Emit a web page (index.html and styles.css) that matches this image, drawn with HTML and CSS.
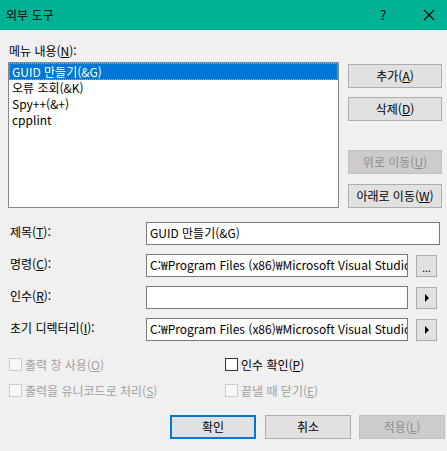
FILE: index.html
```html
<!DOCTYPE html>
<html lang="ko">
<head>
<meta charset="utf-8">
<link rel="stylesheet" href="styles.css">
</head>
<body>
<div class="window">
  <div class="titlebar">
    <span class="title">외부 도구</span>
    <span class="help">?</span>
    <svg class="close" width="12" height="12" viewBox="0 0 12 12"><path d="M1 1L11 11M11 1L1 11" stroke="#000" stroke-width="1.1" fill="none"/></svg>
  </div>
  <div class="content">
    <div class="menu-label">메뉴 내용(<u>N</u>):</div>
    <div class="list-row">
      <div class="listbox">
        <div class="item selected">GUID 만들기(&amp;G)</div>
        <div class="item">오류 조회(&amp;K)</div>
        <div class="item">Spy++(&amp;+)</div>
        <div class="item">cpplint</div>
      </div>
      <div class="side-buttons">
        <div class="btn b-add">추가(<u>A</u>)</div>
        <div class="btn b-del">삭제(<u>D</u>)</div>
        <div class="btn disabled b-up">위로 이동(<u>U</u>)</div>
        <div class="btn b-down">아래로 이동(<u>W</u>)</div>
      </div>
    </div>
    <div class="form">
      <div class="label">제목(<u>T</u>):</div>
      <div class="field"><div class="textbox wide">GUID 만들기(&amp;G)</div></div>
      <div class="label">명령(<u>C</u>):</div>
      <div class="field"><div class="textbox">C:₩Program Files (x86)₩Microsoft Visual Studio</div><div class="small-btn dots"><span>...</span></div></div>
      <div class="label">인수(<u>R</u>):</div>
      <div class="field"><div class="textbox"></div><div class="small-btn"><span class="tri"></span></div></div>
      <div class="label">초기 디렉터리(<u>I</u>):</div>
      <div class="field"><div class="textbox">C:₩Program Files (x86)₩Microsoft Visual Studio</div><div class="small-btn"><span class="tri"></span></div></div>
    </div>
    <div class="checks">
      <div class="check disabled"><span class="box"></span>출력 창 사용(<u>O</u>)</div>
      <div class="check"><span class="box"></span>인수 확인(<u>P</u>)</div>
      <div class="check disabled"><span class="box"></span>출력을 유니코드로 처리(<u>S</u>)</div>
      <div class="check disabled"><span class="box"></span>끝낼 때 닫기(<u>E</u>)</div>
    </div>
    <div class="bottom">
      <div class="btn default">확인</div>
      <div class="btn b-cancel">취소</div>
      <div class="btn disabled b-apply">적용(<u>L</u>)</div>
    </div>
  </div>
</div>
</body>
</html>
```
FILE: styles.css
```css
html, body {
  margin: 0;
  padding: 0;
  background: #f0f0f0;
}
body {
  font-family: "Noto Sans CJK KR", "Noto Sans", sans-serif;
  font-size: 12px;
  color: #000;
  width: 447px;
  height: 451px;
  overflow: hidden;
}
u { text-decoration: underline; text-underline-offset: 1px; }

.titlebar {
  height: 30px;
  background: #00b294;
  display: flex;
  align-items: center;
  padding-left: 6px;
}
.title { flex: 1; line-height: 16px; }
.help { width: 6px; margin-right: 37px; line-height: 16px; font-size: 13px; }
.close { margin-right: 12px; }

.content { padding-left: 8px; }
.menu-label {
  height: 16px;
  line-height: 16px;
  margin-top: 13px;
  padding-left: 1px;
}
.list-row {
  display: flex;
  margin-top: 3px;
}
.listbox {
  width: 329px;
  height: 144px;
  border: 1px solid #828790;
  background: #fff;
}
.item {
  height: 16px;
  line-height: 16px;
  padding-left: 3px;
}
.item.selected {
  background: #0078d7;
  color: #fff;
  height: 15px;
  line-height: 15px;
  border: 1px dotted #ff9a3a;
  padding-left: 2px;
}
.side-buttons {
  margin-left: 9px;
  width: 94px;
  display: flex;
  flex-direction: column;
  padding-top: 2px;
}
.btn {
  box-sizing: border-box;
  height: 24px;
  border: 1px solid #adadad;
  background: #e1e1e1;
  display: flex;
  align-items: center;
  justify-content: center;
  line-height: 16px;
}
.btn.disabled {
  background: #cccccc;
  border-color: #bfbfbf;
  color: #8d8d8d;
}
.b-del { margin-top: 9px; }
.b-up { margin-top: 29px; }
.b-down { margin-top: 10px; }

.form {
  margin-top: 14px;
  display: grid;
  grid-template-columns: 138px 1fr;
  grid-auto-rows: 23px;
  row-gap: 9px;
}
.label {
  line-height: 16px;
  padding-left: 2px;
  padding-top: 2px;
}
.field { display: flex; align-items: flex-start; }
.textbox {
  box-sizing: border-box;
  width: 262px;
  height: 23px;
  border: 1px solid #7a7a7a;
  background: #fff;
  padding-left: 3px;
  line-height: 20px;
  white-space: nowrap;
  overflow: hidden;
}
.textbox.wide { width: 294px; }
.small-btn {
  box-sizing: border-box;
  margin-left: 8px;
  margin-top: 1px;
  width: 21px;
  height: 22px;
  border: 1px solid #adadad;
  background: #e1e1e1;
  display: flex;
  align-items: center;
  justify-content: center;
}
.small-btn.dots {
  align-items: flex-end;
  padding-bottom: 3px;
}
.small-btn.dots span {
  font-size: 10px;
  line-height: 10px;
}
.tri {
  width: 0;
  height: 0;
  border-top: 4px solid transparent;
  border-bottom: 4px solid transparent;
  border-left: 4px solid #000;
  margin-left: 1px;
}

.checks {
  margin-top: 15px;
  display: grid;
  grid-template-columns: 216px 1fr;
  grid-auto-rows: 17px;
  row-gap: 9px;
}
.check {
  display: flex;
  align-items: center;
  line-height: 16px;
  padding-left: 1px;
}
.check .box {
  box-sizing: border-box;
  width: 13px;
  height: 13px;
  border: 1px solid #333;
  background: #fff;
  margin-right: 3px;
}
.check.disabled { color: #a0a0a0; }
.check.disabled .box {
  border-color: #cccccc;
  background: #f7f7f7;
}

.bottom {
  margin-top: 16px;
  display: flex;
  padding-left: 162px;
}
.bottom .btn { width: 86px; }
.btn.default { border: 2px solid #0078d7; }
.b-cancel { margin-left: 9px; }
.b-apply { margin-left: 8px; }
```
